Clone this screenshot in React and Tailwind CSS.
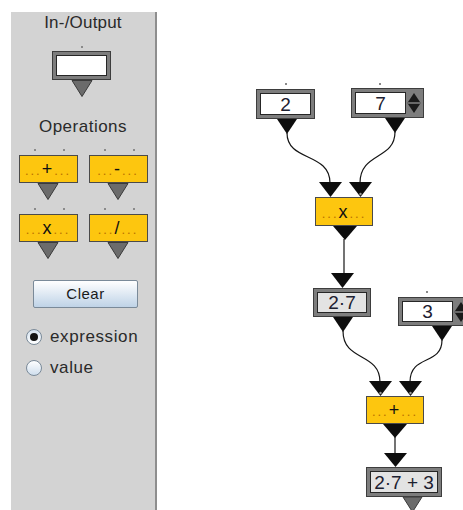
import React from "react";

function Dot({ className = "" }) {
  return <div className={`w-[2px] h-[2px] bg-[#8a8a8a] ${className}`} />;
}

function GrayTri() {
  return (
    <svg width="22" height="17" viewBox="0 0 22 17" className="block">
      <polygon points="1,0.5 21,0.5 11,16.5" fill="#6b6b6b" stroke="#3a3a3a" strokeWidth="1" />
    </svg>
  );
}

function OpLabel({ op }) {
  return (
    <div className="leading-none whitespace-nowrap">
      <span className="text-[13px] text-[#b87000] tracking-[2px]">...</span>
      <span className="text-[18px] text-[#111] pr-[2px]">{op}</span>
      <span className="text-[13px] text-[#b87000] tracking-[2px]">...</span>
    </div>
  );
}

function OpTemplate({ op }) {
  return (
    <div className="flex flex-col items-center w-[59px]">
      <div className="flex w-full justify-start pl-[15px] gap-[27px]">
        <Dot />
        <Dot />
      </div>
      <div className="mt-[4px] w-[59px] h-[28px] bg-[#fdc60f] border border-[#4a4a4a] flex items-end justify-center pb-[4px]">
        <OpLabel op={op} />
      </div>
      <GrayTri />
    </div>
  );
}

function Spinner() {
  return (
    <div className="w-[15px] flex items-center justify-center bg-[#7d7d7d]">
      <svg width="14" height="22" viewBox="0 0 14 22" className="block">
        <polygon points="7,1 13,10 1,10" fill="#1a1a1a" />
        <line x1="0" y1="11" x2="14" y2="11" stroke="#555" strokeWidth="1" />
        <polygon points="1,12 13,12 7,21" fill="#1a1a1a" />
      </svg>
    </div>
  );
}

export default function App() {
  const wire = "#151515";
  return (
    <div className="relative w-[463px] h-[510px] overflow-hidden bg-white flex font-['Liberation_Sans',Arial,sans-serif]">
      {/* Left palette panel */}
      <div className="ml-[11px] mt-[12px] w-[146px] h-[498px] shrink-0 bg-[#d3d3d3] border-r-2 border-[#8e8e8e] flex flex-col items-center text-[#2a2a2a]">
        <div className="mt-[1px] h-[20px] leading-[20px] text-[17px] tracking-[0.2px]">In-/Output</div>

        <div className="mt-[13px] mr-[3px] flex flex-col items-center">
          <Dot />
          <div className="mt-[3px] w-[59px] h-[29px] border border-[#3d3d3d] bg-[#7d7d7d] p-[3px] flex">
            <div className="flex-1 border border-[#262626] bg-white" />
          </div>
          <GrayTri />
        </div>

        <div className="mt-[20px] h-[20px] leading-[20px] text-[17px] tracking-[0.5px]">Operations</div>

        <div className="mt-[12px] flex gap-[11px]">
          <OpTemplate op="+" />
          <OpTemplate op="-" />
        </div>
        <div className="mt-[8px] flex gap-[11px]">
          <OpTemplate op="x" />
          <OpTemplate op="/" />
        </div>

        <button className="mt-[21px] ml-[22px] self-start w-[105px] h-[28px] border border-[#7a8a99] rounded-[2px] bg-linear-to-b from-white to-[#bfd3e7] text-[15px] tracking-[0.5px] text-[#1a1a1a] flex items-center justify-center">
          Clear
        </button>

        <div className="mt-[19px] self-start ml-[15px] h-[20px] flex items-center">
          <div className="w-[16px] h-[16px] rounded-full border border-[#7a8a99] bg-linear-to-b from-[#d6e3f0] to-white flex items-center justify-center">
            <div className="w-[8px] h-[8px] rounded-full bg-[#141414]" />
          </div>
          <span className="ml-[8px] text-[17px] tracking-[0.6px] leading-[20px]">expression</span>
        </div>
        <div className="mt-[11px] self-start ml-[15px] h-[20px] flex items-center">
          <div className="w-[16px] h-[16px] rounded-full border border-[#7a8a99] bg-linear-to-b from-white to-[#cfdeed]" />
          <span className="ml-[8px] text-[17px] tracking-[0.6px] leading-[20px]">value</span>
        </div>
      </div>

      {/* Diagram canvas */}
      <div className="relative flex-1 h-full">
        <svg
          className="absolute left-0 top-0"
          width="306"
          height="510"
          viewBox="157 0 306 510"
        >
          {/* wires */}
          <g fill="none" stroke={wire} strokeWidth="1.2">
            <path d="M287,133 C287,162 330,152 330,183" />
            <path d="M395,132 C395,160 360,152 360,183" />
            <path d="M344,239 L344,274" />
            <path d="M343,331 C343,362 380,352 380,382" />
            <path d="M442,340 C442,366 410,354 410,382" />
            <path d="M395,437 L395,454" />
          </g>
          {/* output triangles */}
          <g fill="#0d0d0d">
            <polygon points="277,119 297,119 287,134" />
            <polygon points="385,118 405,118 395,133" />
            <polygon points="333,226 357,226 345,240" />
            <polygon points="333,317 353,317 343,332" />
            <polygon points="432,326 452,326 442,341" />
            <polygon points="383,424 407,424 395,438" />
          </g>
          {/* input triangles */}
          <g fill="#0d0d0d">
            <polygon points="319,182 342,182 330.5,197" />
            <polygon points="349,182 372,182 360.5,197" />
            <polygon points="331,273 354,273 342.5,288" />
            <polygon points="369,381 392,381 380.5,396" />
            <polygon points="399,381 422,381 410.5,396" />
            <polygon points="384,453 407,453 395.5,467" />
          </g>
          <g fill="#9a9a9a">
            <circle cx="360.5" cy="194" r="1.2" />
            <circle cx="380.5" cy="393" r="1.2" />
            <circle cx="410.5" cy="393" r="1.2" />
          </g>
          {/* final gray output */}
          <polygon points="403,497 422,497 412.5,512" fill="#6b6b6b" stroke="#3a3a3a" strokeWidth="1" />
        </svg>

        {/* input "2" */}
        <Dot className="absolute left-[128px] top-[83px]" />
        <div className="absolute left-[99px] top-[89px] w-[59px] h-[30px] border border-[#3d3d3d] bg-[#7d7d7d] p-[3px] flex">
          <div className="flex-1 border border-[#262626] bg-white flex items-center justify-center text-[19px] leading-none text-[#1c2030]">
            2
          </div>
        </div>

        {/* input "7" with spinner */}
        <Dot className="absolute left-[222px] top-[83px]" />
        <div className="absolute left-[194px] top-[88px] w-[73px] h-[30px] border border-[#3d3d3d] bg-[#7d7d7d] p-[3px] pr-[2px] flex">
          <div className="flex-1 border border-[#262626] bg-white flex items-center justify-center text-[19px] leading-none text-[#1c2030]">
            7
          </div>
          <Spinner />
        </div>

        {/* x operation */}
        <div className="absolute left-[158px] top-[197px] w-[58px] h-[29px] bg-[#fdc60f] border border-[#4a4a4a] flex items-end justify-center pb-[4px]">
          <OpLabel op="x" />
        </div>

        {/* result 2·7 */}
        <div className="absolute left-[156px] top-[288px] w-[58px] h-[29px] border border-[#3d3d3d] bg-[#7d7d7d] p-[3px] flex">
          <div className="flex-1 border border-[#262626] bg-[#e3e3e3] flex items-center justify-center text-[19px] leading-none text-[#1c2030]">
            2·7
          </div>
        </div>

        {/* input "3" with spinner */}
        <Dot className="absolute left-[269px] top-[291px]" />
        <div className="absolute left-[241px] top-[297px] w-[73px] h-[29px] border border-[#3d3d3d] bg-[#7d7d7d] p-[3px] pr-[2px] flex">
          <div className="flex-1 border border-[#262626] bg-white flex items-center justify-center text-[19px] leading-none text-[#1c2030]">
            3
          </div>
          <Spinner />
        </div>

        {/* + operation */}
        <div className="absolute left-[209px] top-[396px] w-[58px] h-[28px] bg-[#fdc60f] border border-[#4a4a4a] flex items-end justify-center pb-[4px]">
          <OpLabel op="+" />
        </div>

        {/* result 2·7 + 3 */}
        <div className="absolute left-[209px] top-[467px] w-[76px] h-[30px] border border-[#3d3d3d] bg-[#7d7d7d] p-[3px] flex">
          <div className="flex-1 border border-[#262626] bg-[#e3e3e3] flex items-center justify-center text-[19px] leading-none text-[#1c2030] whitespace-nowrap">
            2·7 + 3
          </div>
        </div>
      </div>
    </div>
  );
}
